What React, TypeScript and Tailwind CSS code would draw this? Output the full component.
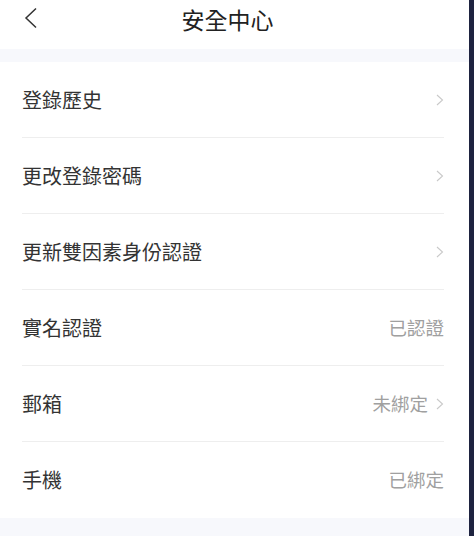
import React from "react";

const rows: { label: string; value?: string; arrow: boolean }[] = [
  { label: "登錄歷史", arrow: true },
  { label: "更改登錄密碼", arrow: true },
  { label: "更新雙因素身份認證", arrow: true },
  { label: "實名認證", value: "已認證", arrow: false },
  { label: "郵箱", value: "未綁定", arrow: true },
  { label: "手機", value: "已綁定", arrow: false },
];

function Chevron() {
  return (
    <svg width="8" height="12" viewBox="0 0 8 12" className="ml-[8px]">
      <path d="M1 1 L6.5 6 L1 11" fill="none" stroke="#c9c9c9" strokeWidth="1.1" />
    </svg>
  );
}

export default function App() {
  return (
    <div
      className="w-[474px] h-[536px] flex bg-white overflow-hidden"
      style={{ fontFamily: '"Noto Sans CJK TC", "Noto Sans", sans-serif' }}
    >
      <div className="flex-1 flex flex-col">
        <div className="h-[49px] relative flex items-start justify-center bg-white">
          <svg width="16" height="22" viewBox="0 0 16 22" className="absolute left-[23px] top-[7px]">
            <path d="M13 1.5 L3 11 L13 20.5" fill="none" stroke="#333" strokeWidth="1.5" />
          </svg>
          <div className="mt-[3px] text-[23px] leading-[32px] text-[#222] -ml-[14px]">安全中心</div>
        </div>
        <div className="h-[13px] bg-[#f7f8fc]" />
        <div className="flex flex-col px-[22px] pr-[25px] bg-white">
          {rows.map((r, i) => (
            <div
              key={r.label}
              className={`h-[76px] flex items-center justify-between ${i < rows.length - 1 ? "border-b border-[#eeeeee]" : ""}`}
            >
              <span className="text-[20px] text-[#333]">{r.label}</span>
              <span className="flex items-center">
                {r.value && <span className="text-[18.5px] text-[#a0a0a0]">{r.value}</span>}
                {r.arrow && <Chevron />}
              </span>
            </div>
          ))}
        </div>
        <div className="flex-1 bg-[#f7f8fc]" />
      </div>
      <div className="w-[5px] bg-[#1e2340]" />
    </div>
  );
}
